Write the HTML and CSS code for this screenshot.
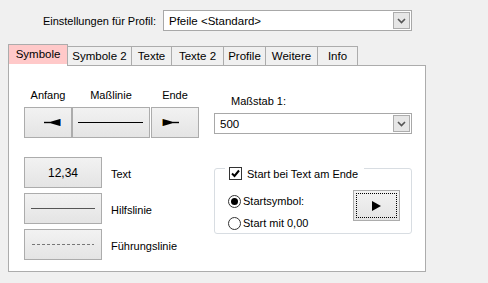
FILE: index.html
```html
<!DOCTYPE html>
<html lang="de">
<head>
    <meta charset="UTF-8">
    <title>Einstellungen</title>
    <link rel="stylesheet" href="styles.css">
</head>
<body>
    <div class="profile-row">
        <label class="profile-label">Einstellungen für Profil:</label>
        <div class="combo profile-combo">
            <span class="combo-text">Pfeile &lt;Standard&gt;</span>
            <span class="drop">
                <svg width="9" height="6" viewBox="0 0 9 6"><path d="M1 1 L4.5 4.5 L8 1" fill="none" stroke="#555" stroke-width="1.6"/></svg>
            </span>
        </div>
    </div>

    <div class="tabs">
        <div class="tab active">Symbole</div>
        <div class="tab">Symbole 2</div>
        <div class="tab">Texte</div>
        <div class="tab">Texte 2</div>
        <div class="tab">Profile</div>
        <div class="tab">Weitere</div>
        <div class="tab">Info</div>
    </div>

    <div class="panel">
        <div class="top-row">
            <div class="line-parts">
                <div class="part part-start">
                    <div class="part-label">Anfang</div>
                    <button class="btn part-btn">
                        <svg width="18" height="9" viewBox="0 0 18 9"><path d="M0 4.5 H6" stroke="#000" stroke-width="1.4"/><path d="M4 4.5 L16 1 V8 Z" fill="#000"/><path d="M16.5 1 V8" stroke="#2a7fd4" stroke-width="1"/></svg>
                    </button>
                </div>
                <div class="part part-line">
                    <div class="part-label">Maßlinie</div>
                    <button class="btn part-btn">
                        <svg width="66" height="3" viewBox="0 0 66 3"><path d="M0 1.5 H65" stroke="#000" stroke-width="1.2"/></svg>
                    </button>
                </div>
                <div class="part part-end">
                    <div class="part-label">Ende</div>
                    <button class="btn part-btn">
                        <svg width="18" height="9" viewBox="0 0 18 9"><path d="M12 4.5 H18" stroke="#000" stroke-width="1.4"/><path d="M14 4.5 L2 1 V8 Z" fill="#000"/><path d="M1.5 1 V8" stroke="#c88a2a" stroke-width="1"/></svg>
                    </button>
                </div>
            </div>

            <div class="scale">
                <div class="scale-label">Maßstab 1:</div>
                <div class="combo scale-combo">
                    <span class="combo-text">500</span>
                    <span class="drop">
                        <svg width="9" height="6" viewBox="0 0 9 6"><path d="M1 1 L4.5 4.5 L8 1" fill="none" stroke="#555" stroke-width="1.6"/></svg>
                    </span>
                </div>
            </div>
        </div>

        <div class="bottom-row">
            <div class="styles">
                <div class="style-row">
                    <button class="btn style-btn">12,34</button>
                    <span class="style-label">Text</span>
                </div>
                <div class="style-row">
                    <button class="btn style-btn">
                        <svg width="64" height="3" viewBox="0 0 64 3"><path d="M0 1.5 H64" stroke="#555" stroke-width="1"/></svg>
                    </button>
                    <span class="style-label">Hilfslinie</span>
                </div>
                <div class="style-row">
                    <button class="btn style-btn">
                        <svg width="62" height="3" viewBox="0 0 62 3"><path d="M0 1.5 H62" stroke="#777" stroke-width="1" stroke-dasharray="3 2"/></svg>
                    </button>
                    <span class="style-label">Führungslinie</span>
                </div>
            </div>

            <div class="group">
                <div class="group-title">
                    <span class="check">
                        <svg width="11" height="11" viewBox="0 0 11 11"><path d="M2 5.5 L4.5 8 L9 2.5" fill="none" stroke="#000" stroke-width="2"/></svg>
                    </span>
                    Start bei Text am Ende
                </div>
                <div class="group-body">
                    <div class="radios">
                        <div class="radio-row"><span class="radio checked"></span>Startsymbol:</div>
                        <div class="radio-row"><span class="radio"></span>Start mit 0,00</div>
                    </div>
                    <button class="btn start-btn">
                        <span class="focus">
                            <svg width="9" height="10" viewBox="0 0 9 10"><path d="M0 0 L9 5 L0 10 Z" fill="#000"/></svg>
                        </span>
                    </button>
                </div>
            </div>
        </div>
    </div>
</body>
</html>
```

FILE: styles.css
```css
body {
    margin: 0;
    background: #f0f0f0;
    font-family: "Liberation Sans", Arial, sans-serif;
    font-size: 11px;
    color: #000;
}

.profile-row {
    display: flex;
    align-items: center;
    padding-top: 10px;
    height: 21px;
}

.profile-label {
    width: 156px;
    text-align: right;
    margin-right: 7px;
}

.combo {
    box-sizing: border-box;
    height: 21px;
    background: #fff;
    border: 1px solid #a8a8a8;
    display: flex;
    align-items: center;
    justify-content: space-between;
    padding: 0 1px 0 5px;
}

.profile-combo {
    width: 249px;
    font-size: 11.5px;
}

.drop {
    box-sizing: border-box;
    width: 17px;
    height: 17px;
    background: #e6e6e6;
    border: 1px solid #acacac;
    display: flex;
    align-items: center;
    justify-content: center;
}

/* tabs */
.tabs {
    display: flex;
    align-items: flex-end;
    margin: 13px 0 0 8px;
    height: 21px;
}

.tab {
    box-sizing: border-box;
    height: 19px;
    border: 1px solid #acacac;
    border-bottom: none;
    background: #f0f0f0;
    margin-right: -1px;
    display: flex;
    align-items: center;
    justify-content: center;
    font-size: 11.5px;
}

.tab:nth-child(1) { width: 60px; }
.tab:nth-child(2) { width: 65px; }
.tab:nth-child(3) { width: 41px; }
.tab:nth-child(4) { width: 53px; }
.tab:nth-child(5) { width: 43px; }
.tab:nth-child(6) { width: 53px; }
.tab:nth-child(7) { width: 41px; }

.tab.active {
    height: 22px;
    background: linear-gradient(#ffc9c9 0, #ffc9c9 19px, #fff 19px);
    margin-bottom: -1px;
    padding-bottom: 4px;
    position: relative;
    z-index: 1;
}

/* panel */
.panel {
    box-sizing: border-box;
    margin-left: 8px;
    width: 418px;
    height: 207px;
    background: #fff;
    border: 1px solid #acacac;
}

.top-row {
    display: flex;
}

.line-parts {
    display: flex;
    margin-left: 15px;
    padding-top: 23px;
}

.part-label {
    height: 13px;
    line-height: 13px;
    text-align: center;
    margin-bottom: 5px;
}

.btn {
    box-sizing: border-box;
    margin: 0;
    padding: 0;
    font-family: inherit;
    font-size: 11.5px;
    color: #000;
    background: linear-gradient(#f2f2f2, #e4e4e4);
    border: 1px solid #acacac;
    display: flex;
    align-items: center;
    justify-content: center;
}

.part-btn {
    height: 31px;
}

.part-start .part-btn { width: 48px; }
.part-line .part-btn { width: 78px; }
.part-end { margin-left: 1px; }
.part-end .part-btn { width: 48px; }

.part-start .part-btn svg { margin-left: 10px; }
.part-end .part-btn svg { margin-right: 10px; }

.scale {
    margin-left: 15px;
    padding-top: 29px;
}

.scale-label {
    height: 13px;
    line-height: 13px;
    padding-left: 17px;
    margin-bottom: 5px;
}

.scale-combo {
    width: 198px;
    font-size: 11.5px;
}

/* bottom */
.bottom-row {
    display: flex;
    margin-top: 19px;
}

.styles {
    margin-left: 15px;
    display: flex;
    flex-direction: column;
    gap: 5px;
}

.style-row {
    display: flex;
    align-items: center;
}

.style-btn {
    width: 78px;
    height: 31px;
    font-size: 12px;
}

.style-label {
    margin-left: 9px;
    padding-top: 2px;
}

.group {
    box-sizing: border-box;
    margin: 11px 13px 0 auto;
    width: 198px;
    height: 66px;
    border: 1px solid #d8dde2;
    border-radius: 3px;
}

.group-title {
    display: inline-flex;
    align-items: center;
    gap: 5px;
    height: 14px;
    margin: -12px 0 0 10px;
    padding: 0 6px 0 4px;
    background: #fff;
    font-size: 11px;
}

.check {
    box-sizing: border-box;
    width: 13px;
    height: 13px;
    border: 1px solid #333;
    background: #fff;
    display: flex;
    align-items: center;
    justify-content: center;
}

.group-body {
    display: flex;
    justify-content: space-between;
    margin-top: 9px;
}

.radios {
    padding-left: 13px;
}

.radio-row {
    display: flex;
    align-items: center;
    height: 22px;
    gap: 2px;
    font-size: 11px;
}

.radio {
    box-sizing: border-box;
    width: 13px;
    height: 13px;
    border: 1px solid #333;
    border-radius: 50%;
    background: #fff;
    display: flex;
    align-items: center;
    justify-content: center;
}

.radio.checked::after {
    content: "";
    width: 7px;
    height: 7px;
    border-radius: 50%;
    background: #000;
}

.start-btn {
    width: 47px;
    height: 31px;
    margin-right: 11px;
}

.focus {
    box-sizing: border-box;
    width: 41px;
    height: 25px;
    border: 1px dotted #000;
    display: flex;
    align-items: center;
    justify-content: center;
}
```
